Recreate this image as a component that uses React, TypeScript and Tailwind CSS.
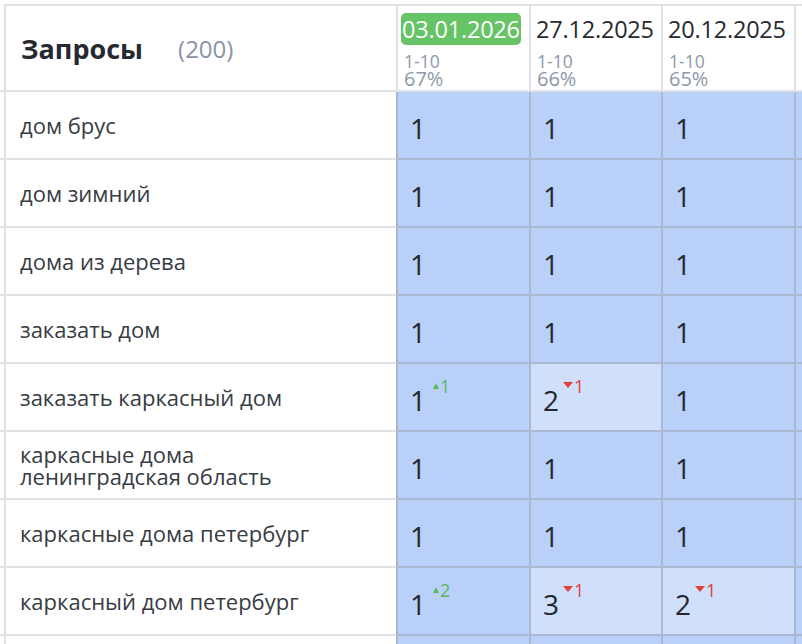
import React from "react";

type Cell = { v: number; d?: number; light?: boolean };
type Row = { label: string[]; cells: Cell[] };

const rows: Row[] = [
  { label: ["дом брус"], cells: [{ v: 1 }, { v: 1 }, { v: 1 }] },
  { label: ["дом зимний"], cells: [{ v: 1 }, { v: 1 }, { v: 1 }] },
  { label: ["дома из дерева"], cells: [{ v: 1 }, { v: 1 }, { v: 1 }] },
  { label: ["заказать дом"], cells: [{ v: 1 }, { v: 1 }, { v: 1 }] },
  { label: ["заказать каркасный дом"], cells: [{ v: 1, d: 1 }, { v: 2, d: -1, light: true }, { v: 1 }] },
  { label: ["каркасные дома", "ленинградская область"], cells: [{ v: 1 }, { v: 1 }, { v: 1 }] },
  { label: ["каркасные дома петербург"], cells: [{ v: 1 }, { v: 1 }, { v: 1 }] },
  { label: ["каркасный дом петербург"], cells: [{ v: 1, d: 2 }, { v: 3, d: -1, light: true }, { v: 2, d: -1, light: true }] },
  { label: [""], cells: [{ v: 0 }, { v: 0 }, { v: 0 }] },
];

const widths = ["w-[133px]", "w-[132px]", "w-[133px]"];

function Delta({ d }: { d: number }) {
  if (d > 0) {
    return (
      <span className="ml-[7px] flex items-start text-[18px] leading-none text-[#5cb85c] -translate-y-[14px]">
        <svg width="6" height="6" viewBox="0 0 6 6" className="mt-[6px] mr-[1px]">
          <polygon points="3,0 6,6 0,6" fill="#5cb85c" />
        </svg>
        {d}
      </span>
    );
  }
  return (
    <span className="ml-[4px] flex items-start text-[18px] leading-none text-[#e0403a] -translate-y-[14px]">
      <svg width="10" height="6" viewBox="0 0 10 6" className="mt-[5px] mr-[1px]">
        <polygon points="0,0 10,0 5,6" fill="#e0403a" />
      </svg>
      {-d}
    </span>
  );
}

export default function App() {
  return (
    <div
      className="w-[802px] h-[644px] overflow-hidden bg-white text-[#272b31]"
      style={{ fontFamily: '"Open Sans", "Noto Sans", sans-serif' }}
    >
      <div className="pt-[4px]">
        {/* header */}
        <div className="flex h-[88px]">
          <div className="w-[4px] shrink-0 border-b-2 border-[#dfe3e8]" />
          <div className="w-[392px] shrink-0 border-l-2 border-t-2 border-b-2 border-[#dfe3e8] flex items-center pl-[15px] pt-[2px]">
            <span className="text-[27px] font-bold text-[#262a30]">Запросы</span>
            <span className="ml-[35px] text-[24px] text-[#8a94a6]">(200)</span>
          </div>
          {[
            { date: "03.01.2026", pct: "67%", cur: true },
            { date: "27.12.2025", pct: "66%" },
            { date: "20.12.2025", pct: "65%" },
          ].map((h, i) => (
            <div
              key={i}
              className={`${widths[i]} shrink-0 border-l-2 border-t-2 border-b-2 border-[#dfe3e8] flex flex-col`}
            >
              <div className="pl-[3px] pt-[7px] h-[47px]">
                {h.cur ? (
                  <span className="inline-block rounded-[5px] bg-[#66c466] px-[1px] text-[23.5px] leading-[32px] text-white tracking-[-0.2px]">
                    {h.date}
                  </span>
                ) : (
                  <span className="inline-block px-[2px] text-[23.5px] leading-[32px] text-[#262a30] tracking-[-0.2px]">
                    {h.date}
                  </span>
                )}
              </div>
              <div className="pl-[6px] text-[17.5px] leading-[17px] text-[#8e98a8]">1-10</div>
              <div className="pl-[6px] text-[20px] leading-[18px] text-[#8e98a8]">{h.pct}</div>
            </div>
          ))}
          <div className="flex-1 border-l-2 border-t-2 border-b-2 border-[#dfe3e8]" />
        </div>
        {/* rows */}
        {rows.map((r, ri) => (
          <div key={ri} className="flex h-[68px]">
            <div className="w-[4px] shrink-0 border-b-2 border-[#dfe3e8]" />
            <div className="w-[392px] shrink-0 border-l-2 border-b-2 border-[#dfe3e8] flex flex-col justify-center pl-[14px] text-[22px] leading-[22px] text-[#373c43]">
              {r.label.map((l, li) => (
                <div key={li}>{l}</div>
              ))}
            </div>
            {r.cells.map((c, ci) => (
              <div
                key={ci}
                className={`${widths[ci]} shrink-0 border-l-2 border-b-2 border-[#aab8d4] flex items-center pl-[12px] pt-[6px] ${
                  c.light ? "bg-[#d0e0fb]" : "bg-[#b9d1f9]"
                }`}
              >
                {c.v > 0 && (
                  <>
                    <span className="text-[28px] leading-none text-[#24282e]">{c.v}</span>
                    {c.d !== undefined && <Delta d={c.d} />}
                  </>
                )}
              </div>
            ))}
            <div className="flex-1 border-l-2 border-b-2 border-[#aab8d4] bg-[#b9d1f9]" />
          </div>
        ))}
      </div>
    </div>
  );
}
